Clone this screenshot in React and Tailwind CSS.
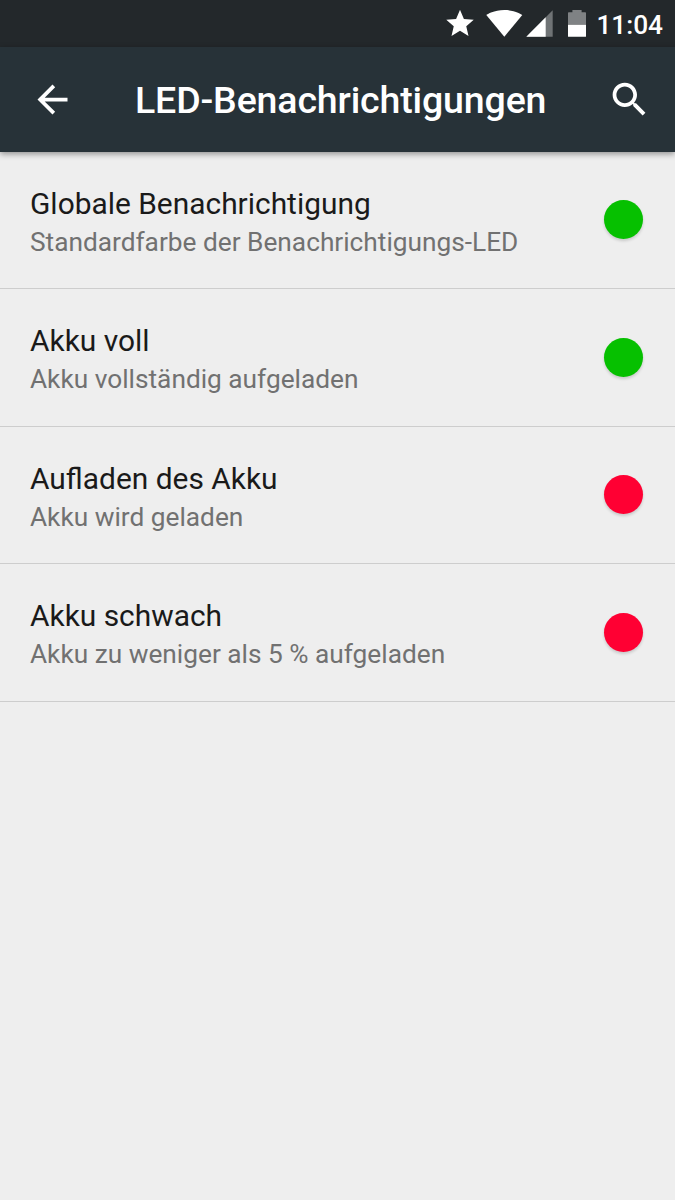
import React from 'react';

const lights = [
    { id: 'default', title: 'Globale Benachrichtigung', summary: 'Standardfarbe der Benachrichtigungs-LED', color: 'bg-[#06c000]' },
    { id: 'full', title: 'Akku voll', summary: 'Akku vollständig aufgeladen', color: 'bg-[#06c000]' },
    { id: 'charging', title: 'Aufladen des Akku', summary: 'Akku wird geladen', color: 'bg-[#ff0033]' },
    { id: 'low', title: 'Akku schwach', summary: 'Akku zu weniger als 5 % aufgeladen', color: 'bg-[#ff0033]' }
];

const StatusBar = () => (
    <div className="flex h-[47px] items-center justify-end bg-[#23282b] pr-[12px] text-white">
        <svg className="mr-[12px] h-[27px] w-[28px]" viewBox="0 0 28 27" fill="currentColor">
            <path d="M14 20.8l8.5 5.1-2.25-9.65 7.5-6.5-9.85-.84L14 -.2l-3.9 9.11-9.85.84 7.5 6.5L5.5 25.9z" />
        </svg>
        <svg className="mr-[3px] h-[27px] w-[37px]" viewBox="0 0 37 27" fill="currentColor">
            <path d="M18.3 26.7L.3 5C1.2 4.3 8 0 18.3 0s17.1 4.3 18 5z" />
        </svg>
        <svg className="mr-[15px] h-[27px] w-[27px]" viewBox="0 0 27 27" fill="currentColor">
            <path d="M.3 26.8h26.4V.2z" opacity=".35" />
            <path d="M.3 26.8h19.4V7.2z" />
        </svg>
        <svg className="mr-[10.5px] h-[27px] w-[18px]" viewBox="0 0 18 27" fill="currentColor">
            <path d="M0 14.7V2.9q0-.7.7-.7h3.7V-.3h9.2v2.5h3.7q.7 0 .7.7v11.8z" opacity=".42" />
            <path d="M0 14.7h18v11.5q0 .6-.6.6H.6q-.6 0-.6-.6z" />
        </svg>
        <span className="pt-[2px] text-[26.25px] leading-[30px] font-medium">11:04</span>
    </div>
);

const Toolbar = () => (
    <header className="relative flex h-[105px] items-center bg-[#273238] pr-[23px] pl-[30px] text-white shadow-[0_2px_6px_rgba(0,0,0,0.4)]">
        <button type="button" aria-label="Zurück" className="mr-[60px]">
            <svg className="h-[45px] w-[45px]" viewBox="0 0 24 24" fill="currentColor">
                <path d="M20 11H7.83l5.59-5.59L12 4l-8 8 8 8 1.41-1.41L7.83 13H20v-2z" />
            </svg>
        </button>
        <h1 className="flex-1 pt-[1px] text-[37.5px] leading-[44px] font-medium tracking-[-0.14px] whitespace-nowrap">LED-Benachrichtigungen</h1>
        <button type="button" aria-label="Suchen">
            <svg className="h-[45px] w-[45px]" viewBox="0 0 24 24" fill="currentColor">
                <path d="M15.5 14h-.79l-.28-.27C15.41 12.59 16 11.11 16 9.5 16 5.91 13.09 3 9.5 3S3 5.91 3 9.5 5.91 16 9.5 16c1.61 0 3.09-.59 4.23-1.57l.27.28v.79l5 4.99L20.49 19l-4.99-5zm-6 0C7.01 14 5 11.99 5 9.5S7.01 5 9.5 5 14 7.01 14 9.5 11.99 14 9.5 14z" />
            </svg>
        </button>
    </header>
);

const LightRow = ({ light }) => (
    <li className="flex h-[137.5px] items-center justify-between border-b border-[#cdcdcd] pr-[32.5px] pl-[30px]">
        <div className="pt-[1.4px]">
            <div className="text-[29.9px] leading-[42px] text-[#1a1a1a]">{light.title}</div>
            <div className="text-[26.25px] leading-[34px] text-[#717171]">{light.summary}</div>
        </div>
        <span className={`h-[39px] w-[39px] rounded-full shadow-[0_2px_3px_rgba(0,0,0,0.16)] ${light.color}`} />
    </li>
);

const App = () => {
    return (
        <div className="min-h-screen bg-[#eeeeee] font-['Roboto',sans-serif]">
            <StatusBar />
            <Toolbar />
            <ul className="-mt-[0.3px]">
                {lights.map(light => (
                    <LightRow key={light.id} light={light} />
                ))}
            </ul>
        </div>
    );
};

export default App;
